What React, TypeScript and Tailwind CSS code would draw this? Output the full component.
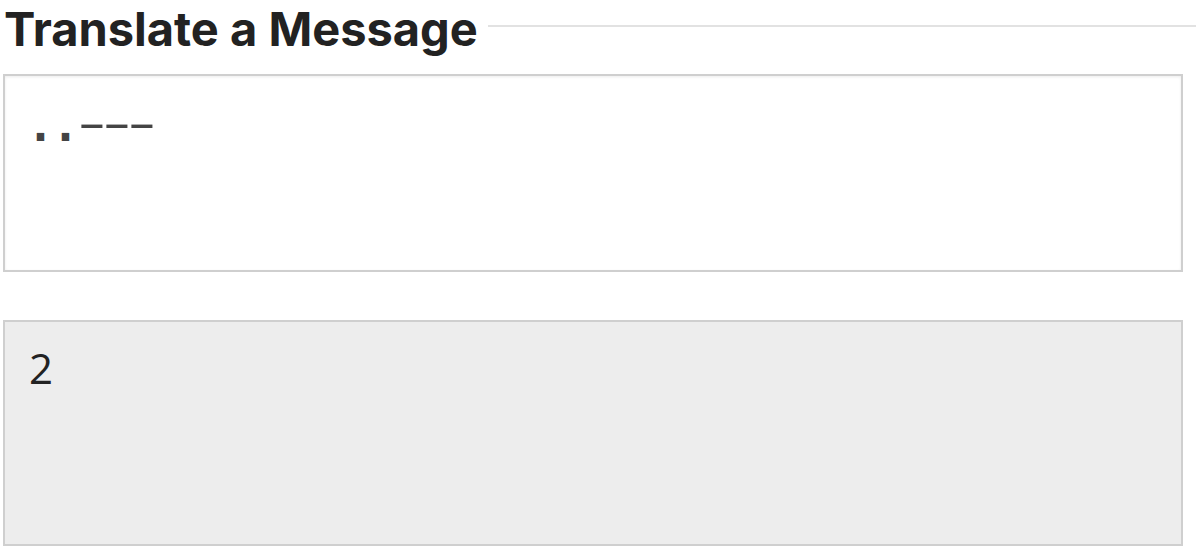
import React from "react";

const sans = { fontFamily: "'DejaVu Sans', sans-serif" };

export default function App() {
  const morse = "..---";
  return (
    <div className="w-[1196px] h-[548px] bg-white overflow-hidden">
      <div className="flex items-center gap-[10px] pl-[4px] h-[56px]">
        <h1 className="text-[47px] leading-none font-bold text-[#222] whitespace-nowrap" style={{ fontFamily: "Inter, 'Noto Sans', sans-serif" }}>
          Translate a Message
        </h1>
        <div className="flex-1 h-[2px] bg-[#e2e2e2] mt-[-4px]" />
      </div>
      <div className="ml-[3px] mt-[18px] w-[1180px] h-[198px] border-2 border-[#cfcfcf] bg-white shadow-[inset_0_1px_3px_rgba(0,0,0,0.08)] pl-[23px] pt-[30px]">
        <div className="flex items-baseline text-[42px] leading-none text-[#444]" style={sans}>
          {morse.split("").map((c, i) =>
            c === "." ? (
              <span key={i} className="inline-block w-[25px] text-center font-bold">.</span>
            ) : (
              <span key={i} className="inline-block w-[25px] text-center">
                <span className="inline-block tracking-[-3px] scale-x-[1.9] translate-y-[-3px] translate-x-[-1px]">-</span>
              </span>
            )
          )}
        </div>
      </div>
      <div className="ml-[3px] mt-[48px] w-[1180px] h-[226px] border-2 border-[#cfcfcf] bg-[#ededed] pl-[24px] pt-[25px]">
        <div className="text-[42px] leading-none text-[#222]" style={{ fontFamily: "'Open Sans', sans-serif" }}>
          2
        </div>
      </div>
    </div>
  );
}
